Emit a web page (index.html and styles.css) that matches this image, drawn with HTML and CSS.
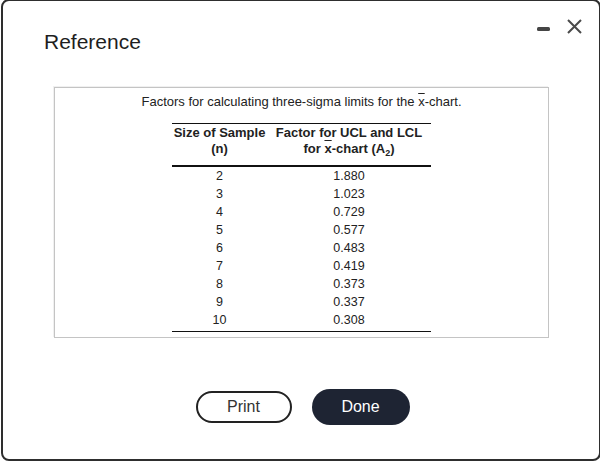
FILE: index.html
```html
<!DOCTYPE html>
<html lang="en">
<head>
<meta charset="utf-8">
<title>Reference</title>
<link rel="stylesheet" href="styles.css">
</head>
<body>
<div class="modal">
  <div class="modal-header">
    <h1 class="title">Reference</h1>
    <div class="window-controls">
      <svg class="controls-icon" width="45" height="15" viewBox="0 0 45 15" aria-hidden="true">
        <rect x="0" y="8" width="13" height="4" rx="1.5" fill="#454545"/>
        <path d="M31 1 L44 14 M44 1 L31 14" stroke="#4a4a4a" stroke-width="2" fill="none"/>
      </svg>
    </div>
  </div>
  <div class="modal-body">
    <div class="ref-box">
      <p class="caption">Factors for calculating three-sigma limits for the <span class="xbar">x</span>-chart.</p>
      <table class="factors">
        <thead>
          <tr>
            <th class="col-n">Size of Sample<br>(n)</th>
            <th class="col-a">Factor for UCL and LCL<br>for <span class="xbar">x</span>-chart (A<sub>2</sub>)</th>
          </tr>
        </thead>
        <tbody>
          <tr><td>2</td><td>1.880</td></tr>
          <tr><td>3</td><td>1.023</td></tr>
          <tr><td>4</td><td>0.729</td></tr>
          <tr><td>5</td><td>0.577</td></tr>
          <tr><td>6</td><td>0.483</td></tr>
          <tr><td>7</td><td>0.419</td></tr>
          <tr><td>8</td><td>0.373</td></tr>
          <tr><td>9</td><td>0.337</td></tr>
          <tr class="last"><td>10</td><td>0.308</td></tr>
        </tbody>
      </table>
    </div>
    <div class="actions">
      <button class="btn btn-outline" type="button">Print</button>
      <button class="btn btn-dark" type="button">Done</button>
    </div>
  </div>
</div>
</body>
</html>
```
FILE: styles.css
```css
html, body {
  margin: 0;
  padding: 0;
  background: #ffffff;
  overflow: hidden;
}

body {
  width: 600px;
  height: 462px;
  font-family: "Liberation Sans", Arial, sans-serif;
  color: #222;
}

.modal {
  box-sizing: border-box;
  width: 600px;
  height: 462px;
  margin: -1px 0 0 1px;
  border: 2px solid #2e2e2e;
  border-radius: 8px;
  background: #fff;
}

.modal-header {
  display: flex;
  justify-content: space-between;
  align-items: flex-start;
  padding: 29px 17px 0 41px;
}

.title {
  margin: 0;
  font-size: 21px;
  line-height: 24px;
  font-weight: normal;
  color: #1e1e1e;
}

.window-controls {
  margin-top: -11px;
  display: flex;
}

.controls-icon {
  display: block;
}

.modal-body {
  padding: 0 50px 0 51px;
  margin-top: 33px;
}

.ref-box {
  border: 1px solid #c4c4c4;
  padding: 7px 0 5px;
  display: flex;
  flex-direction: column;
  align-items: center;
  box-shadow: -1px -1px 0 #f0f0f0;
}

.caption {
  margin: 0;
  font-size: 13px;
  line-height: 14px;
  color: #222;
}

.xbar {
  text-decoration: overline;
}

.factors {
  margin-top: 14px;
  border-collapse: separate;
  border-spacing: 0;
  width: 259px;
  font-size: 12.5px;
  color: #222;
}

.factors th {
  font-size: 13px;
  line-height: 16px;
  font-weight: bold;
  padding: 1px 0 8px;
  border-top: 1px solid #111;
  border-bottom: 2px solid #111;
  text-align: center;
  white-space: nowrap;
}

.factors .col-n {
  width: 95px;
}

.factors sub {
  font-size: 9px;
  line-height: 0;
  vertical-align: -3px;
}

.factors td {
  height: 18px;
  padding: 0;
  line-height: 18px;
  text-align: center;
}

.factors .last td {
  padding-bottom: 2px;
  border-bottom: 1px solid #111;
}

.actions {
  margin-top: 51px;
  display: flex;
  justify-content: center;
  align-items: center;
  gap: 20px;
  padding-left: 2px;
}

.btn {
  font-family: "Liberation Sans", Arial, sans-serif;
  font-size: 16px;
  cursor: pointer;
  box-sizing: border-box;
  padding: 0;
}

.btn-outline {
  width: 96px;
  height: 32px;
  border: 2px solid #222;
  border-radius: 16px;
  background: #fff;
  color: #333;
}

.btn-dark {
  width: 98px;
  height: 36px;
  border: none;
  border-radius: 18px;
  background: #1e2433;
  color: #fff;
}
```
